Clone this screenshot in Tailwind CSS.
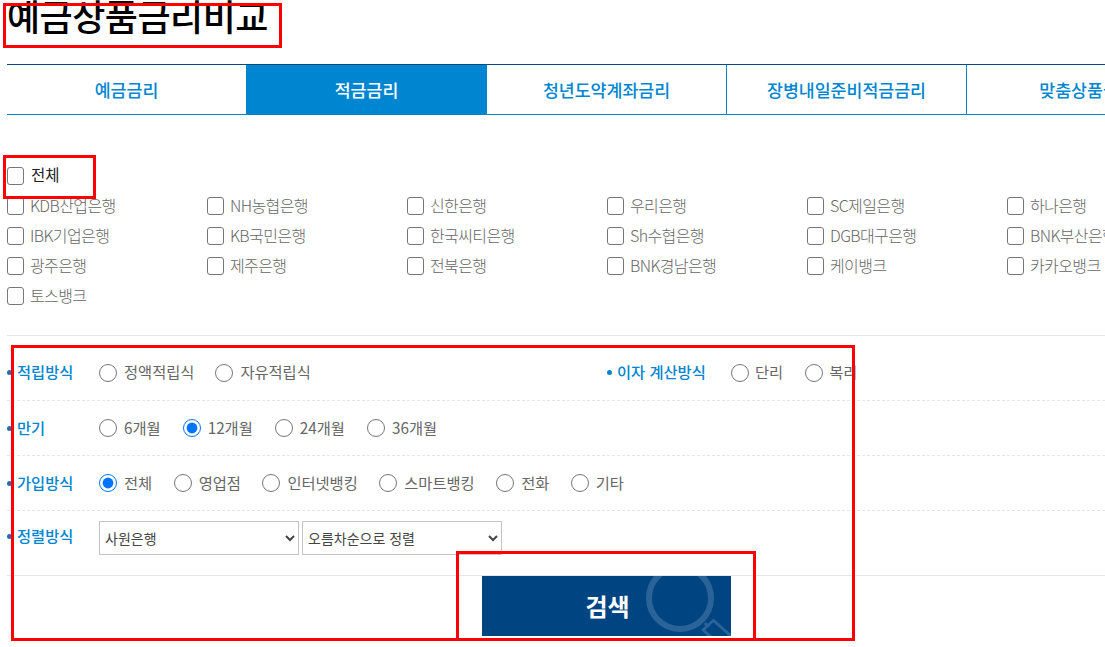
<!DOCTYPE html>
<html lang="ko">
<head>
    <meta charset="utf-8"/>
    <title>예금상품금리비교</title>
    <script src="https://cdn.jsdelivr.net/npm/@tailwindcss/browser@4"></script>
</head>
<body class="relative h-[647px] w-[1105px] overflow-hidden bg-white font-['Noto_Sans_CJK_KR','Noto_Sans',sans-serif] text-[15.3px] text-[#666]">

    <!-- Title -->
    <h1 class="ml-[7px] h-[64px] text-[36px] leading-[31px] font-medium tracking-[-0.5px] text-black">예금상품금리비교</h1>

    <!-- Tabs -->
    <div class="ml-[7px] flex h-[51px] w-[1200px] border-t border-t-[#004a86] border-b border-b-[#0086d1] text-[17.3px] font-medium text-[#0086d1]">
        <a class="flex w-[239px] items-center justify-center">예금금리</a>
        <a class="flex w-[241px] items-center justify-center bg-[#0086d1] text-white">적금금리</a>
        <a class="flex w-[240px] items-center justify-center border-r border-[#0086d1]">청년도약계좌금리</a>
        <a class="flex w-[240px] items-center justify-center border-r border-[#0086d1]">장병내일준비적금금리</a>
        <a class="flex w-[240px] items-center justify-center">맞춤상품금리</a>
    </div>

    <!-- Banks -->
    <div class="ml-[7px] mt-[46px] h-[175px] w-[1098px] border-b border-[#e5e5e5]">
        <label class="flex h-[30px] items-center gap-[7px] pb-[2px] text-[15.5px] text-[#222]"><input type="checkbox" class="mt-[2px] h-[18px] w-[17px] appearance-none rounded-[3px] border border-[#767676] bg-white"/>전체</label>
        <div class="grid w-[1200px] grid-cols-[repeat(6,200px)] auto-rows-[30px] text-[16px] tracking-[-0.6px] font-light">
            <label class="flex items-center gap-[6px] pb-[2px]"><input type="checkbox" class="mt-[2px] h-[18px] w-[17px] appearance-none rounded-[3px] border border-[#767676] bg-white"/>KDB산업은행</label>
            <label class="flex items-center gap-[6px] pb-[2px]"><input type="checkbox" class="mt-[2px] h-[18px] w-[17px] appearance-none rounded-[3px] border border-[#767676] bg-white"/>NH농협은행</label>
            <label class="flex items-center gap-[6px] pb-[2px]"><input type="checkbox" class="mt-[2px] h-[18px] w-[17px] appearance-none rounded-[3px] border border-[#767676] bg-white"/>신한은행</label>
            <label class="flex items-center gap-[6px] pb-[2px]"><input type="checkbox" class="mt-[2px] h-[18px] w-[17px] appearance-none rounded-[3px] border border-[#767676] bg-white"/>우리은행</label>
            <label class="flex items-center gap-[6px] pb-[2px]"><input type="checkbox" class="mt-[2px] h-[18px] w-[17px] appearance-none rounded-[3px] border border-[#767676] bg-white"/>SC제일은행</label>
            <label class="flex items-center gap-[6px] pb-[2px]"><input type="checkbox" class="mt-[2px] h-[18px] w-[17px] appearance-none rounded-[3px] border border-[#767676] bg-white"/>하나은행</label>
            <label class="flex items-center gap-[6px] pb-[2px]"><input type="checkbox" class="mt-[2px] h-[18px] w-[17px] appearance-none rounded-[3px] border border-[#767676] bg-white"/>IBK기업은행</label>
            <label class="flex items-center gap-[6px] pb-[2px]"><input type="checkbox" class="mt-[2px] h-[18px] w-[17px] appearance-none rounded-[3px] border border-[#767676] bg-white"/>KB국민은행</label>
            <label class="flex items-center gap-[6px] pb-[2px]"><input type="checkbox" class="mt-[2px] h-[18px] w-[17px] appearance-none rounded-[3px] border border-[#767676] bg-white"/>한국씨티은행</label>
            <label class="flex items-center gap-[6px] pb-[2px]"><input type="checkbox" class="mt-[2px] h-[18px] w-[17px] appearance-none rounded-[3px] border border-[#767676] bg-white"/>Sh수협은행</label>
            <label class="flex items-center gap-[6px] pb-[2px]"><input type="checkbox" class="mt-[2px] h-[18px] w-[17px] appearance-none rounded-[3px] border border-[#767676] bg-white"/>DGB대구은행</label>
            <label class="flex items-center gap-[6px] pb-[2px]"><input type="checkbox" class="mt-[2px] h-[18px] w-[17px] appearance-none rounded-[3px] border border-[#767676] bg-white"/>BNK부산은행</label>
            <label class="flex items-center gap-[6px] pb-[2px]"><input type="checkbox" class="mt-[2px] h-[18px] w-[17px] appearance-none rounded-[3px] border border-[#767676] bg-white"/>광주은행</label>
            <label class="flex items-center gap-[6px] pb-[2px]"><input type="checkbox" class="mt-[2px] h-[18px] w-[17px] appearance-none rounded-[3px] border border-[#767676] bg-white"/>제주은행</label>
            <label class="flex items-center gap-[6px] pb-[2px]"><input type="checkbox" class="mt-[2px] h-[18px] w-[17px] appearance-none rounded-[3px] border border-[#767676] bg-white"/>전북은행</label>
            <label class="flex items-center gap-[6px] pb-[2px]"><input type="checkbox" class="mt-[2px] h-[18px] w-[17px] appearance-none rounded-[3px] border border-[#767676] bg-white"/>BNK경남은행</label>
            <label class="flex items-center gap-[6px] pb-[2px]"><input type="checkbox" class="mt-[2px] h-[18px] w-[17px] appearance-none rounded-[3px] border border-[#767676] bg-white"/>케이뱅크</label>
            <label class="flex items-center gap-[6px] pb-[2px]"><input type="checkbox" class="mt-[2px] h-[18px] w-[17px] appearance-none rounded-[3px] border border-[#767676] bg-white"/>카카오뱅크</label>
            <label class="flex items-center gap-[6px] pb-[2px]"><input type="checkbox" class="mt-[2px] h-[18px] w-[17px] appearance-none rounded-[3px] border border-[#767676] bg-white"/>토스뱅크</label>
        </div>
    </div>

    <!-- Options -->
    <div class="ml-[7px] w-[1098px]">
        <div class="flex h-[65px] items-center border-b border-dashed border-[#e5e5e5] pt-[9px]">
            <div class="flex w-[600px] items-center">
                <span class="flex w-[92px] items-center gap-[5px] pb-[2px] font-medium text-[#0086d1]"><i class="mt-[2px] h-[5px] w-[5px] rounded-full bg-[#1f6fb5]"></i>적립방식</span>
                <div class="flex items-center gap-[21px]">
                    <label class="flex items-center gap-[7px] pb-[2px]"><input type="radio" name="a" class="m-0 mt-[2px] h-[18px] w-[18px] accent-[#0075ff]"/>정액적립식</label>
                    <label class="flex items-center gap-[7px] pb-[2px]"><input type="radio" name="a" class="m-0 mt-[2px] h-[18px] w-[18px] accent-[#0075ff]"/>자유적립식</label>
                </div>
            </div>
            <span class="flex w-[124px] items-center gap-[5px] pb-[2px] font-medium text-[#0086d1]"><i class="mt-[2px] h-[5px] w-[5px] rounded-full bg-[#0086d1]"></i>이자 계산방식</span>
            <div class="flex items-center gap-[22px]">
                <label class="flex items-center gap-[6px] pb-[2px]"><input type="radio" name="b" class="m-0 mt-[2px] h-[18px] w-[18px] accent-[#0075ff]"/>단리</label>
                <label class="flex items-center gap-[6px] pb-[2px]"><input type="radio" name="b" class="m-0 mt-[2px] h-[18px] w-[18px] accent-[#0075ff]"/>복리</label>
            </div>
        </div>
        <div class="flex h-[55px] items-center border-b border-dashed border-[#e5e5e5]">
            <span class="flex w-[92px] items-center gap-[5px] pb-[2px] font-medium text-[#0086d1]"><i class="mt-[2px] h-[5px] w-[5px] rounded-full bg-[#1f6fb5]"></i>만기</span>
            <div class="flex items-center gap-[22px]">
                <label class="flex items-center gap-[7px] pb-[2px]"><input type="radio" name="c" class="m-0 mt-[2px] h-[18px] w-[18px] accent-[#0075ff]"/>6개월</label>
                <label class="flex items-center gap-[7px] pb-[2px]"><input type="radio" name="c" checked class="m-0 mt-[2px] h-[18px] w-[18px] accent-[#0075ff]"/>12개월</label>
                <label class="flex items-center gap-[7px] pb-[2px]"><input type="radio" name="c" class="m-0 mt-[2px] h-[18px] w-[18px] accent-[#0075ff]"/>24개월</label>
                <label class="flex items-center gap-[7px] pb-[2px]"><input type="radio" name="c" class="m-0 mt-[2px] h-[18px] w-[18px] accent-[#0075ff]"/>36개월</label>
            </div>
        </div>
        <div class="flex h-[55px] items-center border-b border-dashed border-[#e5e5e5]">
            <span class="flex w-[92px] items-center gap-[5px] pb-[2px] font-medium text-[#0086d1]"><i class="mt-[2px] h-[5px] w-[5px] rounded-full bg-[#1f6fb5]"></i>가입방식</span>
            <div class="flex items-center gap-[21.5px]">
                <label class="flex items-center gap-[7px] pb-[2px]"><input type="radio" name="d" checked class="m-0 mt-[2px] h-[18px] w-[18px] accent-[#0075ff]"/>전체</label>
                <label class="flex items-center gap-[7px] pb-[2px]"><input type="radio" name="d" class="m-0 mt-[2px] h-[18px] w-[18px] accent-[#0075ff]"/>영업점</label>
                <label class="flex items-center gap-[7px] pb-[2px]"><input type="radio" name="d" class="m-0 mt-[2px] h-[18px] w-[18px] accent-[#0075ff]"/>인터넷뱅킹</label>
                <label class="flex items-center gap-[7px] pb-[2px]"><input type="radio" name="d" class="m-0 mt-[2px] h-[18px] w-[18px] accent-[#0075ff]"/>스마트뱅킹</label>
                <label class="flex items-center gap-[7px] pb-[2px]"><input type="radio" name="d" class="m-0 mt-[2px] h-[18px] w-[18px] accent-[#0075ff]"/>전화</label>
                <label class="flex items-center gap-[7px] pb-[2px]"><input type="radio" name="d" class="m-0 mt-[2px] h-[18px] w-[18px] accent-[#0075ff]"/>기타</label>
            </div>
        </div>
        <div class="flex h-[65px] items-start border-b border-[#e5e5e5] pt-[10px]">
            <span class="flex h-[30px] w-[92px] items-center gap-[5px] pb-[2px] font-medium text-[#0086d1]"><i class="mt-[2px] h-[5px] w-[5px] rounded-full bg-[#1f6fb5]"></i>정렬방식</span>
            <div class="flex gap-[3px]">
                <select class="h-[34px] w-[200px] border border-[#c4c4c4] bg-white pl-[1px] text-[14px] text-[#444]"><option>사원은행</option></select>
                <select class="h-[34px] w-[200px] border border-[#c4c4c4] bg-white pl-[1px] text-[14px] text-[#444]"><option>오름차순으로 정렬</option></select>
            </div>
        </div>
        <button class="relative ml-[475px] flex h-[60px] w-[249px] items-center justify-center overflow-hidden bg-[#004582] pl-[2px] text-[24px] font-bold text-white">
            검색
            <svg class="absolute left-[160px] top-0 h-[60px] w-[89px]" viewBox="0 0 89 60" fill="none" stroke="#2a6398">
                <circle cx="38" cy="22" r="31" stroke-width="6"/>
                <path d="M71 44 L90 61 M60 53 L70 62 M72 44 L61 54 M63 47 L66 51" stroke-width="3"/>
            </svg>
        </button>
    </div>

    <!-- Red annotation boxes -->
    <div class="absolute left-[3px] top-[3px] h-[45px] w-[279px] border-[3.5px] border-[#ff0000]"></div>
    <div class="absolute left-[3px] top-[155px] h-[44px] w-[93px] border-[3.5px] border-[#ff0000]"></div>
    <div class="absolute left-[11px] top-[345px] h-[296px] w-[844px] border-[3.5px] border-[#ff0000]"></div>
    <div class="absolute left-[456px] top-[551px] h-[90px] w-[300px] border-[3.5px] border-[#ff0000]"></div>
</body>
</html>
